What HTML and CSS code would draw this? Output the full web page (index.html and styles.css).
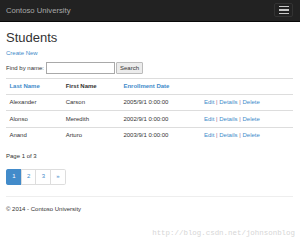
FILE: index.html
```html
<!DOCTYPE html>
<html lang="en">
<head>
  <meta charset="UTF-8" />
  <meta name="viewport" content="width=device-width, initial-scale=1.0"/>
  <title>Students - Contoso University</title>
  <link rel="stylesheet" href="styles.css">
</head>
<body>
  <div class="navbar">
    <a class="navbar-brand" href="#">Contoso University</a>
    <button class="navbar-toggle" type="button">
      <span class="icon-bar"></span>
      <span class="icon-bar"></span>
      <span class="icon-bar"></span>
    </button>
  </div>

  <div class="container">
    <h2>Students</h2>
    <p><a href="#">Create New</a></p>

    <form class="search-form">
      <label for="search-string">Find by name:</label>
      <input type="text" id="search-string" name="SearchString">
      <input type="submit" class="search-btn" value="Search">
    </form>

    <table class="table">
      <tr>
        <th class="col-last"><a href="#">Last Name</a></th>
        <th class="col-first">First Name</th>
        <th class="col-date"><a href="#">Enrollment Date</a></th>
        <th></th>
      </tr>
      <tr>
        <td>Alexander</td>
        <td>Carson</td>
        <td>2005/9/1 0:00:00</td>
        <td><a href="#">Edit</a> <span class="sep">|</span> <a href="#">Details</a> <span class="sep">|</span> <a href="#">Delete</a></td>
      </tr>
      <tr>
        <td>Alonso</td>
        <td>Meredith</td>
        <td>2002/9/1 0:00:00</td>
        <td><a href="#">Edit</a> <span class="sep">|</span> <a href="#">Details</a> <span class="sep">|</span> <a href="#">Delete</a></td>
      </tr>
      <tr>
        <td>Anand</td>
        <td>Arturo</td>
        <td>2003/9/1 0:00:00</td>
        <td><a href="#">Edit</a> <span class="sep">|</span> <a href="#">Details</a> <span class="sep">|</span> <a href="#">Delete</a></td>
      </tr>
    </table>

    <p class="page-info">Page 1 of 3</p>
    <ul class="pagination">
      <li class="active"><a href="#">1</a></li>
      <li><a href="#">2</a></li>
      <li><a href="#">3</a></li>
      <li><a href="#">&raquo;</a></li>
    </ul>

    <hr>
    <footer>
      <p>&copy; 2014 - Contoso University</p>
    </footer>
  </div>

  <div class="watermark">http://blog.csdn.net/johnsonblog</div>
</body>
</html>
```

FILE: styles.css
```css
body {
  margin: 0;
  font-family: "Liberation Sans", Arial, sans-serif;
  font-size: 6px;
  line-height: 8.6px;
  color: #333;
  background: #fff;
}

a {
  color: #428bca;
  text-decoration: none;
}

.navbar {
  display: flex;
  justify-content: space-between;
  align-items: flex-start;
  height: 21px;
  padding: 0 7px 0 6px;
  background: #222;
  border-bottom: 1px solid #080808;
}

.navbar-brand {
  font-size: 7.7px;
  line-height: 21px;
  color: #a8a8a8;
}

.navbar-toggle {
  display: flex;
  flex-direction: column;
  align-items: center;
  justify-content: center;
  gap: 2px;
  width: 19px;
  height: 14px;
  margin-top: 3px;
  padding: 0;
  background: transparent;
  border: 1px solid #333;
  border-radius: 2px;
}

.navbar-toggle .icon-bar {
  display: block;
  width: 10px;
  height: 1.2px;
  background: #c8c8c8;
}

.container {
  padding: 0 7px 0 6px;
}

h2 {
  margin: 8.6px 0 4.3px;
  font-size: 13px;
  font-weight: normal;
  line-height: 14.3px;
}

p {
  margin: 0 0 4.3px;
}

.search-form {
  display: flex;
  align-items: center;
  height: 11.5px;
  margin-bottom: 4px;
}

.search-form label {
  margin-right: 2px;
}

.search-form input[type="text"] {
  box-sizing: border-box;
  width: 69px;
  height: 11.5px;
  margin: 0 1px 0 0;
  padding: 0 2px;
  border: 1px solid #a9a9a9;
  font-size: 6px;
}

.search-btn {
  box-sizing: border-box;
  width: 27px;
  height: 11.5px;
  margin: 0;
  padding: 0;
  font-family: "Liberation Sans", Arial, sans-serif;
  font-size: 6px;
  color: #333;
  background: #ececec;
  border: 1px solid #bbb;
  border-radius: 1px;
}

.table {
  width: 100%;
  table-layout: fixed;
  border-collapse: collapse;
  margin-bottom: 8.6px;
}

.table th,
.table td {
  box-sizing: border-box;
  padding: 3.4px;
  text-align: left;
  line-height: 8.6px;
  vertical-align: top;
  border-top: 1px solid #ddd;
  white-space: nowrap;
}

.table th {
  font-weight: bold;
}

.col-last { width: 56.3px; }
.col-first { width: 57.7px; }
.col-date { width: 80.6px; }

.sep {
  color: #a0678a;
}

.page-info {
  margin: 8.6px 0 0;
}

.pagination {
  display: flex;
  margin: 8.6px 0;
  padding: 0;
  list-style: none;
}

.pagination li a {
  display: block;
  padding: 2.6px 5.2px;
  margin-left: -1px;
  line-height: 8.6px;
  color: #428bca;
  background: #fff;
  border: 1px solid #ddd;
}

.pagination li:first-child a {
  margin-left: 0;
  border-radius: 1.7px 0 0 1.7px;
}

.pagination li:last-child a {
  border-radius: 0 1.7px 1.7px 0;
}

.pagination li.active a {
  color: #fff;
  background: #428bca;
  border-color: #428bca;
}

hr {
  margin: 11px 0 8.6px;
  border: 0;
  border-top: 1px solid #eee;
}

.watermark {
  position: absolute;
  top: 229px;
  right: 5px;
  font-family: "Liberation Mono", "Courier New", monospace;
  font-size: 7.45px;
  line-height: 9px;
  color: #d6d6d6;
}
```
